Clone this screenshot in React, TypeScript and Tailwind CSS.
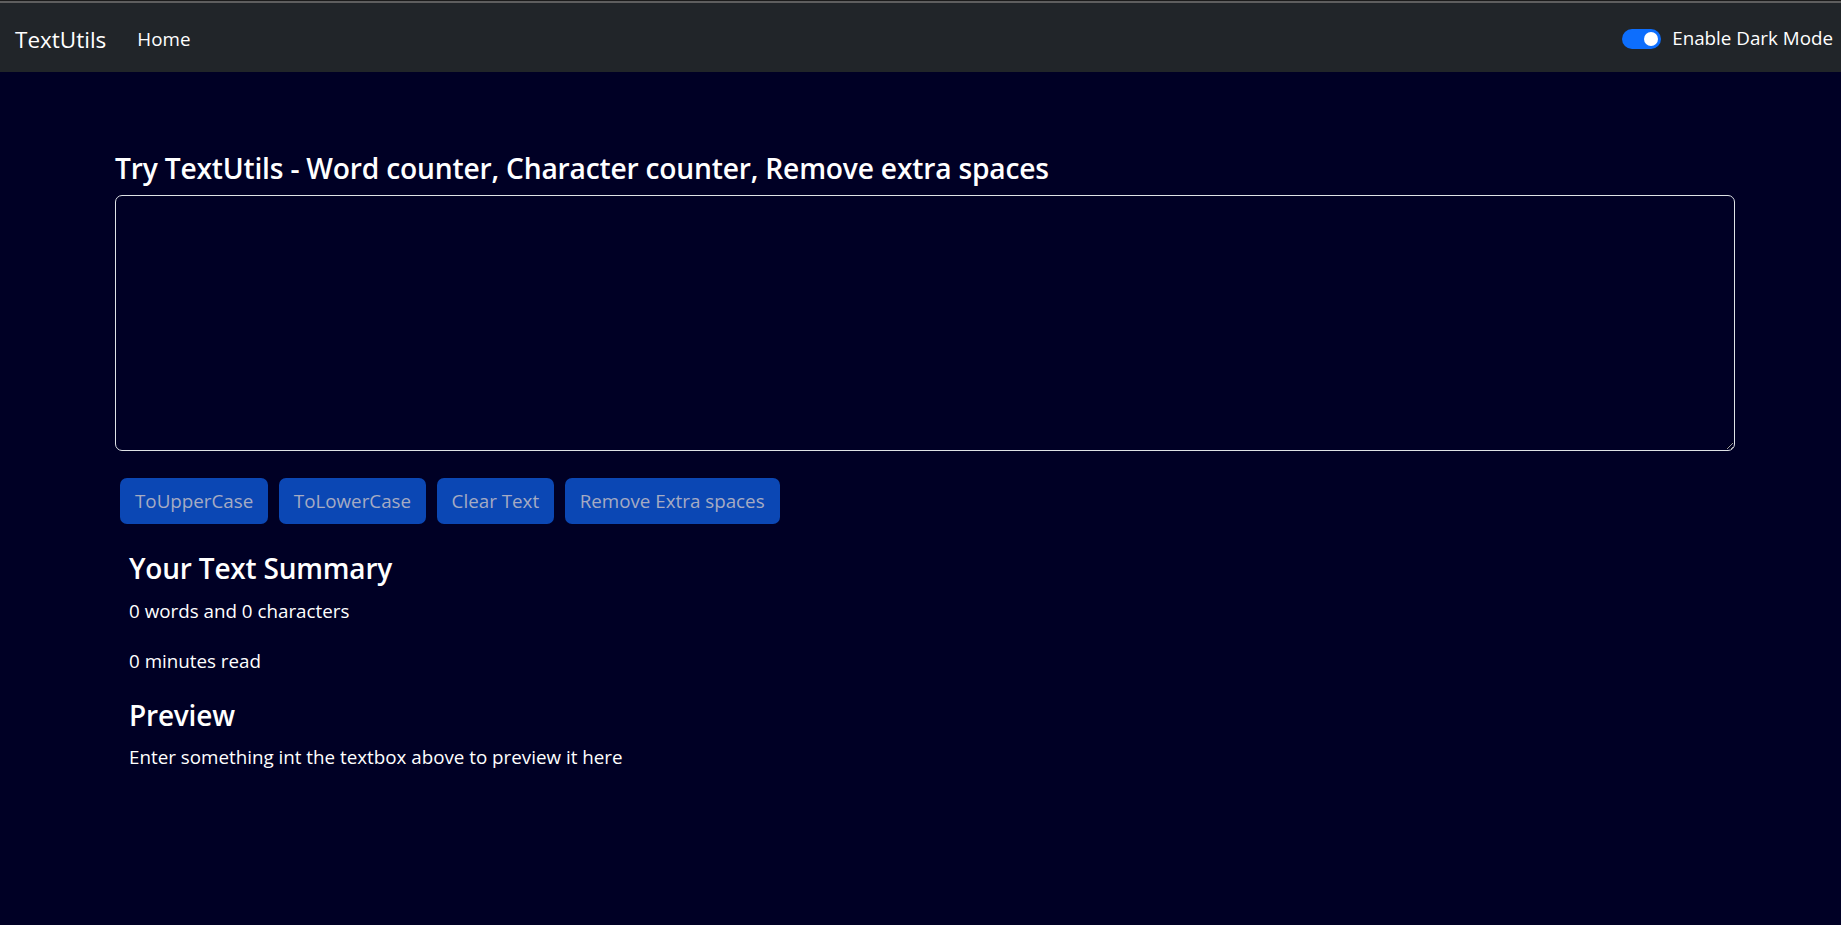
import { useState } from "react";

const font = { fontFamily: '"Open Sans", "Noto Sans", sans-serif' };

function Navbar() {
  return (
    <div>
      <div className="h-px bg-[#1b1b1b]" />
      <div className="h-[2px] bg-[#5e5e5e]" />
      <nav className="h-[69px] bg-[#212529] flex items-center pl-[15px] pr-[8px]">
        <span className="text-[22.5px] text-white mr-[31px] mt-[4px]">TextUtils</span>
        <span className="text-[18.8px] text-white mt-[4px]">Home</span>
        <div className="ml-auto flex items-center gap-[11px] mt-[2px]">
          <div className="w-[39px] h-[20px] rounded-full bg-[#0d6efd] flex items-center justify-end pr-[3px]">
            <div className="w-[14px] h-[14px] rounded-full bg-white" />
          </div>
          <span className="text-[18.8px] text-white">Enable Dark Mode</span>
        </div>
      </nav>
    </div>
  );
}

export default function App() {
  const [text, setText] = useState("");
  const words = text.split(/\s+/).filter((w) => w.length !== 0).length;
  const buttons = ["ToUpperCase", "ToLowerCase", "Clear Text", "Remove Extra spaces"];

  return (
    <div className="min-h-screen bg-[#000025] text-white" style={font}>
      <Navbar />
      <main className="pt-[76px] pb-10">
        <div className="ml-[115px] w-[1620px]">
          <h1 className="text-[28.2px] leading-[40px] font-semibold tracking-[-0.2px] mb-[7px]">
            Try TextUtils - Word counter, Character counter, Remove extra spaces
          </h1>
          <textarea
            value={text}
            onChange={(e) => setText(e.target.value)}
            className="block w-full h-[256px] bg-[#000025] border border-[#dee2e6] rounded-[7px] text-white p-3 outline-none"
          />
          <div className="flex gap-[10.5px] mt-[27px] ml-[5px]">
            {buttons.map((b) => (
              <button
                key={b}
                disabled
                className="h-[46px] px-[15px] rounded-[7px] bg-[#0b47b4] text-[#a5abc3] text-[18.8px]"
              >
                {b}
              </button>
            ))}
          </div>
        </div>
        <div className="ml-[129px] mt-[24px]">
          <h2 className="text-[28px] leading-[40px] font-semibold tracking-[-0.2px] mb-[9px]">Your Text Summary</h2>
          <p className="text-[18.8px] leading-[28px] mb-[22px]">
            {words} words and {text.length} characters
          </p>
          <p className="text-[18.8px] leading-[28px] mb-[20px]">
            {0.008 * words} minutes read
          </p>
          <h2 className="text-[28px] leading-[40px] font-semibold tracking-[-0.2px] mb-[8px]">Preview</h2>
          <p className="text-[18.8px] leading-[28px]">
            {text.length > 0 ? text : "Enter something int the textbox above to preview it here"}
          </p>
        </div>
      </main>
    </div>
  );
}
